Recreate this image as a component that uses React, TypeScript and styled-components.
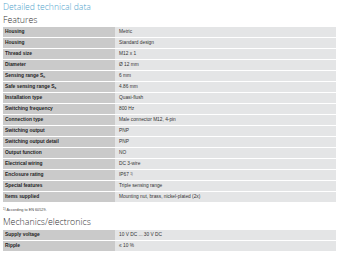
import React from "react";
import styled, { createGlobalStyle } from "styled-components";

const Global = createGlobalStyle`
  html, body { margin: 0; padding: 0; background: #fff; }
  body { font-family: "Liberation Sans", Arial, sans-serif; }
`;

const Page = styled.div`
  width: 340px;
  height: 256px;
  overflow: hidden;
  padding: 0 4px 0 3px;
  box-sizing: border-box;
`;

const Title = styled.div`
  font-family: "Open Sans", "Liberation Sans", sans-serif;
  font-weight: 300;
  font-size: 8.6px;
  line-height: 10px;
  color: #4fa3cc;
  padding-top: 2px;
  height: 14px;
  box-sizing: border-box;
`;

const Section = styled.div<{ $h: number }>`
  font-family: "Open Sans", "Liberation Sans", sans-serif;
  font-weight: 300;
  font-size: 8.8px;
  line-height: ${(p) => p.$h}px;
  height: ${(p) => p.$h}px;
  color: #333;
`;

const Table = styled.div`
  display: flex;
  flex-direction: column;
  gap: 1px;
`;

const Row = styled.div`
  display: grid;
  grid-template-columns: 112px 1fr;
  height: 10px;
  overflow: hidden;
`;

const Label = styled.div`
  background: #cacaca;
  font-size: 4.9px;
  font-weight: bold;
  color: #1e1e1e;
  line-height: 10px;
  padding-left: 2px;
  white-space: nowrap;
`;

const Value = styled.div`
  background: #e4e5e6;
  font-size: 4.8px;
  color: #333;
  line-height: 10px;
  padding-left: 4px;
  white-space: nowrap;
`;

const Footnote = styled.div`
  font-size: 3.8px;
  color: #444;
  height: 13px;
  line-height: 6px;
  padding-top: 5px;
  box-sizing: border-box;
`;

const Sup = styled.sup`
  font-size: 3px;
  line-height: 0;
  vertical-align: 1.5px;
`;

const Sub = styled.sub`
  font-size: 3px;
  line-height: 0;
  vertical-align: -0.8px;
`;

const features: [React.ReactNode, React.ReactNode][] = [
  ["Housing", "Metric"],
  ["Housing", "Standard design"],
  ["Thread size", "M12 x 1"],
  ["Diameter", "Ø 12 mm"],
  [<>Sensing range S<Sub>n</Sub></>, "6 mm"],
  [<>Safe sensing range S<Sub>a</Sub></>, "4.86 mm"],
  ["Installation type", "Quasi-flush"],
  ["Switching frequency", "800 Hz"],
  ["Connection type", "Male connector M12, 4-pin"],
  ["Switching output", "PNP"],
  ["Switching output detail", "PNP"],
  ["Output function", "NO"],
  ["Electrical wiring", "DC 3-wire"],
  ["Enclosure rating", <>IP67 <Sup>1)</Sup></>],
  ["Special features", "Triple sensing range"],
  ["Items supplied", "Mounting nut, brass, nickel-plated (2x)"],
];

const mech: [string, string][] = [
  ["Supply voltage", "10 V DC ... 30 V DC"],
  ["Ripple", "≤ 10 %"],
];

export default function App() {
  return (
    <Page>
      <Global />
      <Title>Detailed technical data</Title>
      <Section $h={13}>Features</Section>
      <Table>
        {features.map(([l, v], i) => (
          <Row key={i}>
            <Label>{l}</Label>
            <Value>{v}</Value>
          </Row>
        ))}
      </Table>
      <Footnote>
        <Sup>1)</Sup> According to EN 60529.
      </Footnote>
      <Section $h={15}>Mechanics/electronics</Section>
      <Table>
        {mech.map(([l, v], i) => (
          <Row key={i}>
            <Label>{l}</Label>
            <Value>{v}</Value>
          </Row>
        ))}
      </Table>
    </Page>
  );
}
